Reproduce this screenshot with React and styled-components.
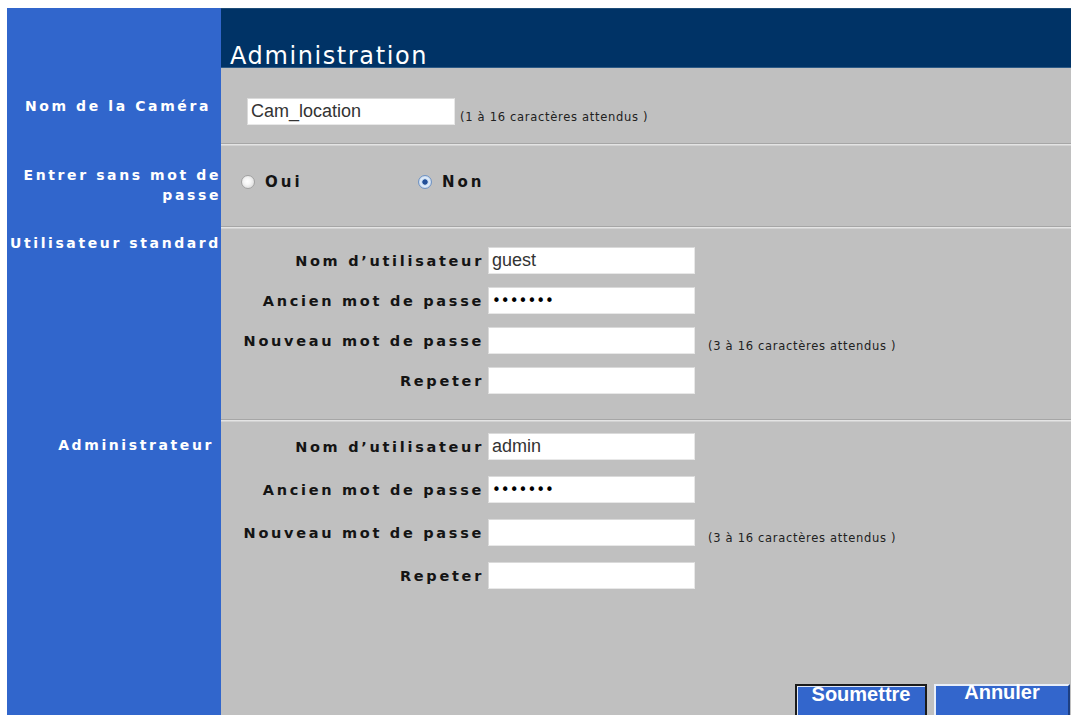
import React from "react";
import styled, { createGlobalStyle } from "styled-components";

const Global = createGlobalStyle`
  html, body { margin: 0; padding: 0; overflow: hidden; background: #ffffff; }
  body { padding: 8px 0 0 7px; }
`;

const Page = styled.div`
  display: grid;
  grid-template-columns: 214px 850px;
  grid-template-rows: 60px 75px 83px 193px 320px;
`;

const Side = styled.div`
  background: #3166cc;
  color: #ffffff;
  font-family: "DejaVu Sans", Verdana, sans-serif;
  font-weight: bold;
  font-size: 14px;
  letter-spacing: 2.6px;
  line-height: 20px;
  text-align: right;
  display: flex;
  flex-direction: column;
  justify-content: ${(p) => (p.$top ? "flex-start" : "center")};
  padding-top: ${(p) => p.$top || 0}px;
  padding-right: ${(p) => p.$inset || 0}px;
`;

const Header = styled.div`
  background: #003366;
  border-top: 1px solid #1d4c78;
  border-bottom: 1px solid #2d5a86;
  color: #ffffff;
  font-family: "DejaVu Sans", Verdana, sans-serif;
  font-size: 24px;
  letter-spacing: 1.6px;
  line-height: 22px;
  display: flex;
  align-items: flex-end;
  padding-left: 9px;
`;

const Section = styled.div`
  background: #c0c0c0;
  border-top: ${(p) => (p.$divided ? "1px solid #a6a6a6" : "none")};
  box-shadow: ${(p) => (p.$divided ? "inset 0 1px 0 #e4e4e4, inset 0 2px 0 #d2d2d2" : "none")};
  padding: ${(p) => p.$pad || "0"};
  display: flex;
  flex-direction: column;
`;

const InlineRow = styled.div`
  display: flex;
  align-items: flex-end;
`;

const TextBox = styled.input`
  box-sizing: border-box;
  width: ${(p) => p.$w || 207}px;
  height: 27px;
  margin: 0;
  padding: 0 3px;
  background: #ffffff;
  border: 1px solid #dadada;
  border-right-color: #e8e8e8;
  border-bottom-color: #e8e8e8;
  font-family: ${(p) =>
    p.type === "password" ? '"DejaVu Sans", sans-serif' : '"Liberation Sans", Arial, sans-serif'};
  font-size: ${(p) => (p.type === "password" ? 15 : 18)}px;
  color: ${(p) => (p.type === "password" ? "#000000" : "#333333")};
  outline: none;
`;

const Hint = styled.span`
  font-family: "DejaVu Sans", Tahoma, sans-serif;
  font-size: 11.5px;
  letter-spacing: 0.7px;
  color: #202020;
  line-height: 13px;
  margin-left: ${(p) => p.$gap || 9}px;
  padding-bottom: 1px;
  white-space: nowrap;
`;

const RadioRow = styled.div`
  display: flex;
  align-items: center;
  height: 100%;
  padding: 0 0 6px 20px;
  box-sizing: border-box;
`;

const RadioOption = styled.label`
  display: flex;
  align-items: center;
  gap: 10px;
  width: ${(p) => p.$w || "auto"};
  font-family: "DejaVu Sans", Verdana, sans-serif;
  font-weight: bold;
  font-size: 15px;
  letter-spacing: 3px;
  color: #141414;
`;

const RadioDot = styled.span`
  box-sizing: border-box;
  width: 14px;
  height: 14px;
  border-radius: 50%;
  border: 1px solid ${(p) => (p.$on ? "#6f93c4" : "#a2a2a2")};
  background: ${(p) =>
    p.$on
      ? "radial-gradient(circle, #234f98 0, #234f98 2.3px, #bcd4ee 3px, #e4eefa 4.2px, #9dbbe0 100%)"
      : "radial-gradient(circle at 45% 45%, #ffffff 0, #f6f6f6 35%, #d0d0d0 100%)"};
`;

const FieldGrid = styled.div`
  display: grid;
  grid-template-columns: 263px 207px auto;
  column-gap: 4px;
  row-gap: ${(p) => p.$gap}px;
  align-items: center;
`;

const FieldLabel = styled.span`
  font-family: "DejaVu Sans", Verdana, sans-serif;
  font-weight: bold;
  font-size: 14.5px;
  letter-spacing: 2.7px;
  color: #141414;
  text-align: right;
  white-space: nowrap;
`;

const HintCell = styled.div`
  align-self: end;
  display: flex;
`;

const Actions = styled.div`
  display: flex;
  justify-content: flex-end;
  gap: 7px;
  padding-right: 1px;
  margin-top: ${(p) => p.$top}px;
`;

const Button = styled.button`
  box-sizing: border-box;
  width: ${(p) => p.$w}px;
  height: 36px;
  margin: 0;
  padding: 0;
  background: #3366cc;
  color: #ffffff;
  font-family: "Liberation Sans", Arial, sans-serif;
  font-weight: bold;
  font-size: 20px;
  line-height: ${(p) => (p.$focused ? 16 : 13)}px;
  display: flex;
  justify-content: center;
  align-items: flex-start;
  border-style: solid;
  border-width: 2px;
  border-color: ${(p) =>
    p.$focused ? "#1a1a1a" : "#e8eef8 #1d3f82 #1d3f82 #e8eef8"};
  box-shadow: ${(p) => (p.$focused ? "inset 1px 1px 0 #dfe7f6" : "none")};
  cursor: pointer;
`;

function Field({ label, value, type = "text", hint }) {
  return (
    <>
      <FieldLabel>{label}</FieldLabel>
      <TextBox type={type} defaultValue={value} readOnly />
      <HintCell>{hint ? <Hint $gap={9}>{hint}</Hint> : null}</HintCell>
    </>
  );
}

const HINT3 = "(3 à 16 caractères attendus )";

export default function App() {
  return (
    <>
      <Global />
      <Page>
        <Side />
        <Header>Administration</Header>

        <Side $inset={10}>Nom de la Caméra</Side>
        <Section $pad="30px 0 0 26px">
          <InlineRow>
            <TextBox $w={208} defaultValue="Cam_location" readOnly />
            <Hint $gap={5}>(1 à 16 caractères attendus )</Hint>
          </InlineRow>
        </Section>

        <Side>
          <span>Entrer sans mot de passe</span>
        </Side>
        <Section $divided>
          <RadioRow>
            <RadioOption $w="177px">
              <RadioDot />
              Oui
            </RadioOption>
            <RadioOption>
              <RadioDot $on />
              Non
            </RadioOption>
          </RadioRow>
        </Section>

        <Side $top={7}>Utilisateur standard</Side>
        <Section $divided $pad="20px 0 0 0">
          <FieldGrid $gap={13}>
            <Field label="Nom d’utilisateur" value="guest" />
            <Field label="Ancien mot de passe" value="1234567" type="password" />
            <Field label="Nouveau mot de passe" value="" type="password" hint={HINT3} />
            <Field label="Repeter" value="" type="password" />
          </FieldGrid>
        </Section>

        <Side $top={16} $inset={7}>Administrateur</Side>
        <Section $divided $pad="13px 0 0 0">
          <FieldGrid $gap={16}>
            <Field label="Nom d’utilisateur" value="admin" />
            <Field label="Ancien mot de passe" value="1234567" type="password" />
            <Field label="Nouveau mot de passe" value="" type="password" hint={HINT3} />
            <Field label="Repeter" value="" type="password" />
          </FieldGrid>
          <Actions $top={95}>
            <Button $w={132} $focused>Soumettre</Button>
            <Button $w={136}>Annuler</Button>
          </Actions>
        </Section>
      </Page>
    </>
  );
}
